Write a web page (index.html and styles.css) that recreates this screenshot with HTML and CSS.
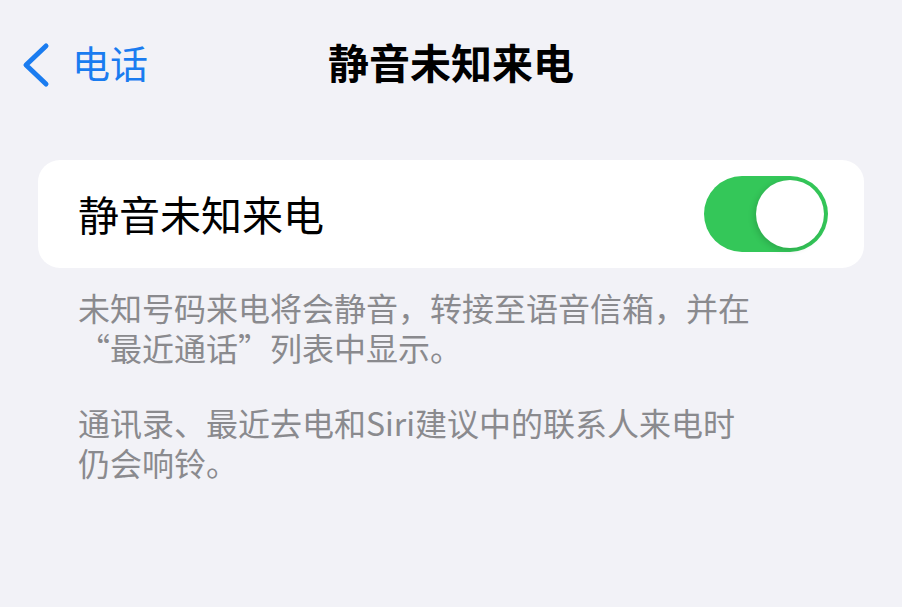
FILE: index.html
```html
<!DOCTYPE html>
<html lang="zh-CN">
<head>
    <meta charset="UTF-8">
    <meta name="viewport" content="width=device-width, initial-scale=1.0">
    <title>静音未知来电</title>
    <link rel="stylesheet" href="styles.css">
</head>
<body>
    <!-- Barra de navegación -->
    <div class="nav">
        <a class="back" href="#">
            <svg class="chevron" width="28" height="46" viewBox="0 0 28 46">
                <polyline points="24,4 4,23 24,42" fill="none" stroke="currentColor" stroke-width="5" stroke-linecap="round" stroke-linejoin="round"/>
            </svg>
            <span>电话</span>
        </a>
        <h1 class="title">静音未知来电</h1>
        <div></div>
    </div>

    <!-- Ajuste -->
    <div class="card">
        <span class="label">静音未知来电</span>
        <div class="switch on">
            <div class="knob"></div>
        </div>
    </div>

    <div class="footer">
        <p>未知号码来电将会静音，转接至语音信箱，并在“最近通话”列表中显示。</p>
        <p>通讯录、最近去电和Siri建议中的联系人来电时仍会响铃。</p>
    </div>
</body>
</html>
```

FILE: styles.css
```css
body {
    font-family: "Noto Sans CJK SC", "Noto Sans", sans-serif;
    background-color: #f2f2f7;
    color: #000;
    margin: 0;
}
.nav {
    display: grid;
    grid-template-columns: 1fr auto 1fr;
    align-items: center;
    height: 122px;
    padding: 0 22px;
}
.back {
    display: flex;
    align-items: center;
    gap: 22px;
    color: #1a7cf0;
    text-decoration: none;
    font-size: 38px;
}
.chevron {
    display: block;
    margin-top: 8px; /* baja la flecha respecto al texto */
}
.title {
    margin: 0;
    font-size: 41px;
    font-weight: 700;
}
.card {
    display: flex;
    align-items: center;
    justify-content: space-between;
    height: 108px;
    margin: 38px 38px 0;
    padding: 0 36px 0 40px;
    background: #fff;
    border-radius: 22px;
}
.label {
    font-size: 41px;
    margin-bottom: 2px;
}
.switch {
    position: relative;
    width: 124px;
    height: 76px;
    border-radius: 38px;
    background: #e9e9eb;
}
.switch.on {
    background: #34c759;
}
.knob {
    position: absolute;
    top: 4px;
    right: 4px;
    width: 68px;
    height: 68px;
    border-radius: 50%;
    background: #fff;
    box-shadow: -2px 2px 6px rgba(0, 0, 0, 0.15);
}
.footer {
    margin: 19px 38px 0;
    padding: 0 40px;
    color: #8a8a8e;
    font-size: 32px;
    line-height: 40px;
}
.footer p {
    max-width: 676px;
    margin: 0 0 35px;
}
```
